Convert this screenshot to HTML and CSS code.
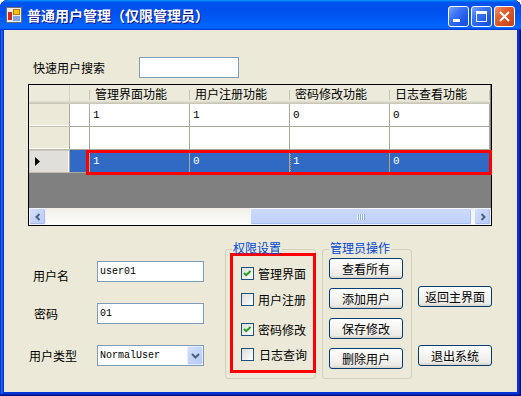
FILE: index.html
```html
<!DOCTYPE html>
<html lang="zh-CN">
<head>
    <meta charset="UTF-8">
    <title>普通用户管理（仅限管理员）</title>
    <link rel="stylesheet" href="styles.css">
</head>
<body>
<div class="window">
    <div class="titlebar">
        <svg class="app-icon" width="16" height="16" viewBox="0 0 16 16">
            <rect x="0.5" y="0.5" width="15" height="15" fill="#ececec" stroke="#707070"/>
            <rect x="2" y="5" width="4" height="8" fill="#d42a20"/>
            <rect x="7.5" y="2.5" width="6" height="5" fill="#f7c400" stroke="#b37b00"/>
            <rect x="7" y="9" width="7" height="5" fill="#7ea6e0"/>
        </svg>
        <span class="title">普通用户管理（仅限管理员）</span>
        <div class="title-buttons">
            <span class="tb">
                <svg width="19" height="19" viewBox="0 0 19 19"><rect x="4" y="12" width="7" height="3" fill="#fff"/></svg>
            </span>
            <span class="tb">
                <svg width="19" height="19" viewBox="0 0 19 19"><path d="M4.5 6.5h10v8h-10z" fill="none" stroke="#fff"/><rect x="4" y="4" width="11" height="3" fill="#fff"/></svg>
            </span>
            <span class="tb tb-close">
                <svg width="19" height="19" viewBox="0 0 19 19"><path d="M5 5l9 9M14 5l-9 9" stroke="#fff" stroke-width="2"/></svg>
            </span>
        </div>
    </div>

    <div class="client">
        <div class="search-row">
            <span class="search-label">快速用户搜索</span>
            <input class="textbox search-box" type="text">
        </div>

        <div class="grid">
            <div class="grid-table">
                <div class="grid-row">
                    <div class="corner"></div>
                    <div class="hcell"></div>
                    <div class="hcell">管理界面功能</div>
                    <div class="hcell">用户注册功能</div>
                    <div class="hcell">密码修改功能</div>
                    <div class="hcell">日志查看功能</div>
                </div>
                <div class="grid-row">
                    <div class="rowhead"></div>
                    <div class="cell"></div>
                    <div class="cell">1</div>
                    <div class="cell">1</div>
                    <div class="cell">0</div>
                    <div class="cell">0</div>
                </div>
                <div class="grid-row">
                    <div class="rowhead"></div>
                    <div class="cell"></div>
                    <div class="cell"></div>
                    <div class="cell"></div>
                    <div class="cell"></div>
                    <div class="cell"></div>
                </div>
                <div class="grid-row selected">
                    <div class="rowhead">
                        <svg width="5" height="9" viewBox="0 0 5 9"><path d="M0 0l5 4.5L0 9z" fill="#000"/></svg>
                    </div>
                    <div class="cell"></div>
                    <div class="cell">1</div>
                    <div class="cell">0</div>
                    <div class="cell focus">1</div>
                    <div class="cell">0</div>
                </div>
            </div>
            <div class="grid-empty"></div>
            <div class="hscroll">
                <span class="sb-btn">
                    <svg width="8" height="8" viewBox="0 0 8 8"><path d="M5.5 1L2.5 4l3 3" fill="none" stroke="#4d6185" stroke-width="2"/></svg>
                </span>
                <div class="sb-track">
                    <span class="sb-thumb"><span class="grip"></span></span>
                </div>
                <span class="sb-btn">
                    <svg width="8" height="8" viewBox="0 0 8 8"><path d="M2.5 1l3 3-3 3" fill="none" stroke="#4d6185" stroke-width="2"/></svg>
                </span>
            </div>
            <div class="row-mark"></div>
        </div>

        <div class="bottom">
            <div class="user-form">
                <label class="field-label name-label">用户名</label>
                <input class="textbox" type="text" value="user01">
                <label class="field-label pwd-label">密码</label>
                <input class="textbox" type="text" value="01">
                <label class="field-label">用户类型</label>
                <div class="combo">
                    <span class="combo-text">NormalUser</span>
                    <span class="combo-btn">
                        <svg width="9" height="6" viewBox="0 0 9 6"><path d="M1 1l3.5 3.5L8 1" fill="none" stroke="#4d6185" stroke-width="2"/></svg>
                    </span>
                </div>
            </div>

            <div class="group perm-group">
                <div class="group-title">权限设置</div>
                <div class="mark-box">
                    <div class="check-row">
                        <span class="checkbox"><svg width="11" height="11" viewBox="0 0 11 11"><path d="M2 5l2.2 2.2L8.5 3" fill="none" stroke="#21a121" stroke-width="2"/></svg></span>
                        <span>管理界面</span>
                    </div>
                    <div class="check-row">
                        <span class="checkbox"></span>
                        <span>用户注册</span>
                    </div>
                    <div class="check-row">
                        <span class="checkbox"><svg width="11" height="11" viewBox="0 0 11 11"><path d="M2 5l2.2 2.2L8.5 3" fill="none" stroke="#21a121" stroke-width="2"/></svg></span>
                        <span>密码修改</span>
                    </div>
                    <div class="check-row">
                        <span class="checkbox"></span>
                        <span class="last-label">日志查询</span>
                    </div>
                </div>
            </div>

            <div class="group admin-group">
                <div class="group-title">管理员操作</div>
                <div class="admin-buttons">
                    <button class="btn">查看所有</button>
                    <button class="btn">添加用户</button>
                    <button class="btn">保存修改</button>
                    <button class="btn">删除用户</button>
                </div>
            </div>

            <div class="side-buttons">
                <button class="btn">返回主界面</button>
                <button class="btn">退出系统</button>
            </div>
        </div>
    </div>
</div>
</body>
</html>
```

FILE: styles.css
```css
body {
    margin: 0;
    background: #fff;
    font-family: "Noto Sans CJK SC", sans-serif;
    font-size: 12px;
    color: #000;
}
.window {
    width: 521px;
    height: 396px;
    box-sizing: border-box;
    padding-bottom: 4px;
    display: flex;
    flex-direction: column;
    background: #0831d9;
    border-radius: 8px 8px 0 0;
    box-shadow: inset -1px -1px #00138c, inset 1px 1px #0831d9, inset -2px -2px #001ea0, inset 2px 2px #166aee, inset -3px -3px #003bda, inset 3px 3px #0855dd;
    overflow: hidden;
}
.titlebar {
    height: 30px;
    flex: none;
    box-sizing: border-box;
    display: flex;
    align-items: center;
    padding: 0 6px;
    border-radius: 8px 8px 0 0;
    background: linear-gradient(180deg, #0997ff, #0053ee 8%, #0050ee 40%, #06f 88%, #06f 93%, #005bff 95%, #003dd7 96%, #003dd7);
}
.app-icon {
    display: block;
}
.title {
    margin-left: 5px;
    color: #fff;
    font-size: 14px;
    font-weight: bold;
    line-height: 16px;
    text-shadow: 1px 1px #0f1089;
}
.title-buttons {
    margin-left: auto;
    margin-top: 2px;
    display: flex;
    gap: 2px;
}
.tb {
    width: 21px;
    height: 21px;
    box-sizing: border-box;
    border: 1px solid #fff;
    border-radius: 3px;
    display: flex;
    background: linear-gradient(135deg, #7aa4fb 0%, #3c75f4 35%, #1d58e6 75%, #1b4fd8 100%);
}
.tb-close {
    background: linear-gradient(135deg, #f09070 0%, #e2602f 35%, #d04a1e 75%, #c24418 100%);
}
.client {
    flex: 1;
    margin: 0 4px;
    background: #ece9d8;
}

/* search */
.search-row {
    display: flex;
    align-items: center;
    margin-top: 27px;
    padding-left: 29px;
}
.search-label {
    width: 106px;
    line-height: 13px;
}
.textbox {
    box-sizing: border-box;
    height: 21px;
    width: 107px;
    margin: 0;
    padding: 0 2px;
    border: 1px solid #7f9db9;
    background: #fff;
    font-family: "Liberation Mono", monospace;
    font-size: 10px;
    color: #000;
    outline: none;
}
.search-box {
    width: 100px;
}

/* data grid */
.grid {
    position: relative;
    box-sizing: border-box;
    width: 464px;
    height: 142px;
    margin: 6px 0 0 24px;
    border: 1px solid #000;
    background: #808080;
    display: flex;
    flex-direction: column;
}
.grid-table {
    display: grid;
    grid-template-columns: 41px 20px repeat(4, 100px);
    grid-template-rows: 19px repeat(3, 23px);
}
.grid-row {
    display: contents;
}
.corner {
    background: #ebeadb;
    border-right: 1px solid #d6d2c2;
    box-shadow: inset 0 -1px #cbc7b8, inset 0 -2px #d6d2c2, inset 0 -3px #e2decd;
}
.hcell {
    box-sizing: border-box;
    padding-left: 5px;
    line-height: 17px;
    background: linear-gradient(#c7c5b2, #c7c5b2) right 0 top 5px / 1px 10px no-repeat, #ebeadb;
    box-shadow: inset 0 -1px #cbc7b8, inset 0 -2px #d6d2c2, inset 0 -3px #e2decd;
    white-space: nowrap;
}
.rowhead {
    box-sizing: border-box;
    background: #ece9d8;
    border-right: 1px solid #aca899;
    border-bottom: 1px solid #c2bfae;
    box-shadow: inset 0 -1px #fff;
    display: flex;
    align-items: center;
    padding-left: 6px;
}
.cell {
    box-sizing: border-box;
    background: #fff;
    border-right: 1px solid #aca899;
    border-bottom: 1px solid #aca899;
    padding-left: 3px;
    line-height: 22px;
    font-family: "Liberation Mono", monospace;
    font-size: 11px;
}
.selected .rowhead {
    background: #e0dfda;
    box-shadow: inset 1px 1px #c9c7bb, inset -1px 0 #fff;
}
.selected .cell {
    background: #316ac5;
    color: #fff;
}
.cell.focus {
    outline: 1px dotted #ce953a;
    outline-offset: -1px;
}
.grid-empty {
    flex: 1;
}
.hscroll {
    height: 17px;
    flex: none;
    display: flex;
    background: linear-gradient(#f1efe6, #fdfdfb);
}
.sb-btn {
    width: 17px;
    height: 17px;
    box-sizing: border-box;
    border: 1px solid #eef3fe;
    border-radius: 2px;
    background: linear-gradient(135deg, #d2defa, #b8cbf6);
    box-shadow: inset -1px -1px #a7bdf0;
    display: flex;
    align-items: center;
    justify-content: center;
}
.sb-track {
    flex: 1;
    display: flex;
}
.sb-thumb {
    margin-left: 204px;
    width: 222px;
    box-sizing: border-box;
    border: 1px solid #f3f6fe;
    border-radius: 2px;
    background: linear-gradient(#cbdafc, #bfd0f8);
    box-shadow: inset -1px -1px #a9c0f3;
    display: flex;
    align-items: center;
    justify-content: center;
}
.grip {
    width: 8px;
    height: 6px;
    background: repeating-linear-gradient(to right, #eef4fe 0 1px, #8cadf2 1px 2px);
}
.row-mark {
    position: absolute;
    left: 57px;
    top: 65px;
    width: 406px;
    height: 25px;
    box-sizing: border-box;
    border: 3px solid #f00;
}

/* bottom part */
.bottom {
    display: flex;
    align-items: flex-start;
    margin-top: 16px;
}
.user-form {
    display: grid;
    grid-template-columns: 68px 107px;
    grid-auto-rows: 21px;
    row-gap: 21px;
    align-items: center;
    padding-top: 19px;
    margin-left: 25px;
}
.field-label {
    line-height: 13px;
}
.name-label {
    margin-left: 4px;
    align-self: end;
}
.pwd-label {
    margin-left: 5px;
}
.combo {
    box-sizing: border-box;
    height: 21px;
    border: 1px solid #7f9db9;
    background: #fff;
    display: flex;
    align-items: center;
    padding: 0 0 0 2px;
}
.combo-text {
    flex: 1;
    font-family: "Liberation Mono", monospace;
    font-size: 10px;
}
.combo-btn {
    width: 16px;
    height: 19px;
    box-sizing: border-box;
    border: 1px solid #e4ebfd;
    border-radius: 2px;
    background: linear-gradient(135deg, #d3dffb, #b6c9f5);
    display: flex;
    align-items: center;
    justify-content: center;
}
.group {
    box-sizing: border-box;
    height: 130px;
    margin-top: 7px;
    border: 1px solid #d0d0bf;
    border-radius: 3px;
}
.perm-group {
    width: 91px;
    margin-left: 21px;
}
.admin-group {
    width: 90px;
    margin-left: 6px;
}
.group-title {
    width: max-content;
    margin: -8px 0 0 6px;
    padding: 0 1px;
    line-height: 12px;
    color: #0046d5;
    background: #ece9d8;
}
.mark-box {
    width: 86px;
    box-sizing: border-box;
    border: 3px solid #f00;
    margin: -1px 0 0 4px;
    padding: 11px 0 9px 8px;
}
.check-row {
    display: flex;
    align-items: center;
    gap: 4px;
    height: 13px;
    line-height: 13px;
}
.check-row:nth-child(2) {
    margin-top: 13px;
}
.check-row:nth-child(3) {
    margin-top: 17px;
}
.check-row:nth-child(4) {
    margin-top: 12px;
}
.last-label {
    margin-left: 1px;
}
.checkbox {
    width: 13px;
    height: 13px;
    box-sizing: border-box;
    border: 1px solid #1c5180;
    background: linear-gradient(135deg, #dcdcd7, #fff);
    display: flex;
}
.admin-buttons {
    display: flex;
    flex-direction: column;
    gap: 9px;
    padding: 4px 0 0 6px;
}
.btn {
    width: 74px;
    height: 21px;
    padding: 0;
    border: 1px solid #003c74;
    border-radius: 3px;
    background: linear-gradient(180deg, #fff, #ecebe6 86%, #d6d0c5);
    font-family: "Noto Sans CJK SC", sans-serif;
    font-size: 12px;
    line-height: 13px;
    color: #000;
}
.side-buttons {
    display: flex;
    flex-direction: column;
    gap: 38px;
    margin: 44px 0 0 6px;
}
```
